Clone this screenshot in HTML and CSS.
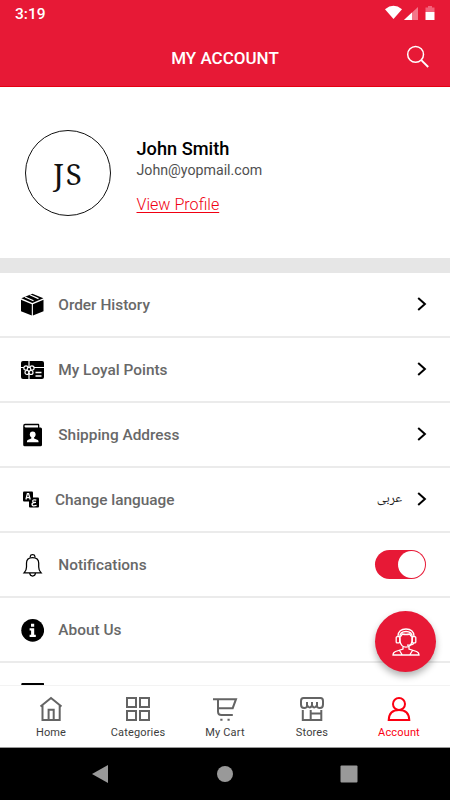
FILE: index.html
```html
<!DOCTYPE html>
<html lang="en">
<head>
<meta charset="utf-8">
<title>My Account</title>
<link rel="stylesheet" href="styles.css">
</head>
<body>
<div class="app">
  <header class="header">
    <div class="status">
      <span class="time">3:19</span>
      <svg class="status-icons" width="52" height="16" viewBox="0 0 52 16">
        <path d="M0 4.2Q8.500-2.600 17 4.200L8.500 14Z" fill="#fff"/>
        <path d="M33 2V15H19Z" fill="#f3778a"/><path d="M27 7.400V15H19Z" fill="#fff"/>
        <path d="M43 1h4v1.500h2.500V7h-9V2.500H43Z" fill="#f3627a"/><path d="M40.500 7h9v8h-9Z" fill="#fff"/>
      </svg>
    </div>
    <div class="titlebar">
      <h1>MY ACCOUNT</h1>
      <svg class="search" width="24" height="24" viewBox="0 0 24 24" fill="none" stroke="#fff"><circle cx="9.600" cy="9.400" r="7.900" stroke-width="1.500"/><path d="M15.300 15.100L22.200 22" stroke-width="1.900"/></svg>
    </div>
  </header>

  <section class="profile">
    <div class="avatar">JS</div>
    <div class="who">
      <div class="name">John Smith</div>
      <div class="email">John@yopmail.com</div>
      <a class="view">View Profile</a>
    </div>
  </section>

  <main class="list">
    <div class="row">
      <svg class="icon" width="24" height="24" viewBox="0 0 24 24"><path d="M12.400 .8L23.400 5.300L12.400 10L1.400 5.300Z"/><path d="M1 6.800L11.800 11.200V22.600L1 18.200ZM23.500 6.800L12.900 11.200V22.600L23.500 18.200Z"/><path d="M5 4L13.500 7.800M9.800 1.800L18.500 5.600" stroke="#fff" stroke-width="1.200"/></svg>
      <span class="label">Order History</span>
      <svg class="chev" width="10" height="14" viewBox="0 0 10 14"><path d="M1.200 1L7.900 7L1.200 13"/></svg>
    </div>
    <div class="row">
      <svg class="icon" width="24" height="24" viewBox="0 0 24 24"><rect x="1" y="3" width="23" height="18" rx="2"/><g fill="none" stroke="#fff" stroke-width="1.200"><path d="M9 3V21M1 9.500H24"/><path d="M15.500 14.500h6M15.500 18h6" stroke-width="1.500"/><g fill="#000"><circle cx="6" cy="10" r="2.200"/><circle cx="11.900" cy="10" r="2.200"/><circle cx="7" cy="14.500" r="2"/><circle cx="11" cy="14.500" r="2"/><circle cx="9" cy="11.200" r="1.800"/></g></g></svg>
      <span class="label">My Loyal Points</span>
      <svg class="chev" width="10" height="14" viewBox="0 0 10 14"><path d="M1.200 1L7.900 7L1.200 13"/></svg>
    </div>
    <div class="row">
      <svg class="icon" width="24" height="24" viewBox="0 0 24 24"><path d="M5 .8H18.200Q19.300 .8 19.300 2V4.500H20.500Q22 4.500 22 6V21.700Q22 23.300 20.500 23.300H4.800Q3.200 23.300 3.200 21.700V2.700Q3.200.8 5 .8Z"/><path d="M5.100 2.200H18V4.400H5.500Q4.500 4.200 4.500 3.200Q4.500 2.400 5.100 2.200Z" fill="#fff"/><circle cx="12.700" cy="11.400" r="2.900" fill="#fff"/><path d="M11.300 13.500h2.800v1.900l3.700 1.500q.8.400.8 2.400H6.900q0-2 .8-2.400l3.600-1.500Z" fill="#fff"/></svg>
      <span class="label">Shipping Address</span>
      <svg class="chev" width="10" height="14" viewBox="0 0 10 14"><path d="M1.200 1L7.900 7L1.200 13"/></svg>
    </div>
    <div class="row lang">
      <svg class="icon" width="24" height="24" viewBox="0 0 24 24"><rect x="3" y="3.600" width="10" height="10" rx="1"/><rect x="9" y="9.600" width="10" height="10" rx="1"/><g fill="none" stroke="#fff" stroke-width="1.300"><path d="M5.900 11.500L7.400 5.600H8.600L10.200 11.500M6.700 9.700H9.400"/><path d="M16.300 12.100Q12.300 11.200 12.800 13.500Q13.200 14.500 15.300 14.400Q12 14.700 12 16.400Q12.200 18.700 16.600 17.400M13.200 14.400H16"/></g></svg>
      <span class="label">Change language</span>
      <span class="arabic" lang="ar" dir="rtl">عربى</span>
      <svg class="chev" width="10" height="14" viewBox="0 0 10 14"><path d="M1.200 1L7.900 7L1.200 13"/></svg>
    </div>
    <div class="row">
      <svg class="icon" width="24" height="24" viewBox="0 0 24 24" fill="none" stroke="#000" stroke-width="1.250"><path d="M4.200 19.800Q6.500 17.500 6.500 14V10Q6.500 4.500 12.500 4.500Q18.700 4.500 18.700 10V14Q18.700 17.500 21 19.800Z"/><path d="M10.300 4.600V3.200Q10.500 1.500 12.600 1.500Q14.700 1.500 14.900 3.200V4.600M9.700 20Q10 23 12.600 23T15.500 20"/></svg>
      <span class="label">Notifications</span>
      <span class="toggle"><span class="knob"></span></span>
    </div>
    <div class="row">
      <svg class="icon" width="24" height="24" viewBox="0 0 24 24"><circle cx="12.700" cy="12.300" r="11.400"/><path d="M11 5.800h3.200v3H11ZM9.600 10.300h4.600v6.500h1.600v2.100H9.600v-2.100h1.500v-4.400H9.600Z" fill="#fff"/></svg>
      <span class="label">About Us</span>
    </div>
    <div class="row">
      <svg class="icon" width="24" height="24" viewBox="0 0 24 24"><rect x="1.300" y="0" width="23" height="20" rx="1"/></svg>
    </div>
  </main>

  <div class="support">
    <svg width="30" height="30" viewBox="0 0 30 30" fill="none" stroke="#fff" stroke-width="1.300"><path d="M7 10V9Q7.500 2 15 2Q22.500 2 23 9V10M8.700 10Q9 4.500 15 4.500Q21 4.500 21.300 10"/><path d="M9 9V14Q10 20.200 15 20.200Q20 20.200 21 14V9M9.200 9.500Q10.600 9 11.200 7Q15 8 18.800 7Q19.400 9 21 9.500"/><rect x="5.200" y="9.600" width="3.500" height="6.300" rx="1"/><rect x="21.300" y="9.600" width="3.500" height="6.300" rx="1"/><path d="M22.900 16Q22 18.200 16 18.200M12 19.500V22L4.500 24.500Q2 25.500 2 28H28Q28 25.500 25.500 24.500L18 22V19.500M8.500 23.500L11 27.500M21.500 23.500L19 27.500"/></svg>
  </div>

  <nav class="tabs">
    <div class="tab"><svg width="26" height="26" viewBox="0 0 26 26"><path d="M2.500 10.500L13 2L23.500 10.500M4.500 9V23.900H21.700V9M10.600 23V13.700H15.700V23"/></svg><span>Home</span></div>
    <div class="tab"><svg width="26" height="26" viewBox="0 0 26 26"><path d="M2 2h9v9H2ZM15 2h9v9h-9ZM2 15h9v9H2ZM15 15h9v9h-9Z"/></svg><span>Categories</span></div>
    <div class="tab"><svg width="26" height="26" viewBox="0 0 26 26"><path d="M1 3.200H24L20.700 12.200H6.200M6 3.200V15.500Q6 19 9.500 19H20.800"/><path d="M8.300 23.800h2.200M15.500 23.800h2.200" stroke-width="2"/></svg><span>My Cart</span></div>
    <div class="tab"><svg width="26" height="26" viewBox="0 0 26 26"><path d="M4.500 2H21.500Q24 2 24 5V8.500Q24 12 20.800 12Q18 12 17.700 9.500Q15.200 13.500 13 9.500Q10.800 13.500 8.300 9.500Q8 12 5.200 12Q2 12 2 8.500V5Q2 2 4.500 2ZM8 6v4M13 6v4M18 6v4M3.800 14V24H11.700V14M11.700 17.500H22.300M22.300 14V24H11"/></svg><span>Stores</span></div>
    <div class="tab active"><svg width="26" height="26" viewBox="0 0 26 26"><circle cx="13" cy="8" r="6"/><path d="M2.700 24Q3 14 13 14T23.300 24Z"/></svg><span>Account</span></div>
  </nav>

  <div class="system">
    <svg width="18" height="20" viewBox="0 0 18 20"><path d="M-1 10L15 1V19Z" transform="translate(1)"/></svg>
    <svg width="18" height="20" viewBox="0 0 18 20"><circle cx="9" cy="10" r="8"/></svg>
    <svg width="18" height="20" viewBox="0 0 18 20"><rect x=".5" y="1.500" width="17" height="17" rx="1"/></svg>
  </div>
</div>
</body>
</html>
```

FILE: styles.css
```css
* { box-sizing: border-box; }
body { margin: 0; font-family: Roboto, "Liberation Sans", sans-serif; background: #fff; }
svg { display: block; flex: none; }
.app { position: relative; width: 450px; height: 800px; overflow: hidden; display: flex; flex-direction: column; }
.header { height: 87px; flex: none; background: #e71936; border-bottom: 1px solid #e50012; color: #fff; }
.status { height: 28px; display: flex; justify-content: space-between; padding: 5px 13px 0 15px; }
.time { font-size: 15.500px; line-height: 18px; font-weight: 500; }
.titlebar { height: 59px; display: grid; grid-template-columns: 44px 1fr 44px; align-items: center; }
h1 { grid-column: 2; margin: 0; font-size: 17px; line-height: 20px; font-weight: 500; text-align: center; }
.search { margin-bottom: 2px; }
.profile { height: 171px; flex: none; display: flex; align-items: center; padding-left: 25px; gap: 25.500px; }
.avatar { width: 86px; height: 86px; border: 1.200px solid #111; border-radius: 50%; display: flex; align-items: center; justify-content: center; font-family: "Noto Serif", "Droid Serif", "Liberation Serif", serif; font-size: 29.500px; letter-spacing: 2px; color: #111; padding: 2px 0 0 1px; }
.who { padding-top: 8px; }
.name { font-size: 18.200px; line-height: 23px; font-weight: 500; color: #000; }
.email { font-size: 14.200px; line-height: 20px; font-weight: 400; color: #505050; }
.view { display: block; margin-top: 14px; font-size: 16.100px; line-height: 22px; font-weight: 300; color: #f00012; text-decoration: underline; text-decoration-thickness: 1px; text-underline-offset: 2px; }
.list { flex: 1; min-height: 0; overflow: hidden; border-top: 15px solid #e6e6e6; }
.row { height: 65px; display: flex; align-items: center; padding: 0 23px 0 20px; border-bottom: 2px solid #ebebeb; }
.icon { margin-right: 14.300px; }
.label { font-size: 15.400px; line-height: 20px; font-weight: 500; color: #686868; margin-right: auto; white-space: nowrap; padding-top: 1px; }
.lang .icon { margin-right: 11px; }
.chev { fill: none; stroke: #000; stroke-width: 2; margin-bottom: 1px; }
.arabic { font-family: "Noto Naskh Arabic", "Noto Sans Arabic", "DejaVu Sans", sans-serif; font-size: 13.500px; line-height: 20px; color: #222; margin-right: 15px; }
.toggle { width: 51px; height: 29px; border-radius: 15px; background: #e71936; display: flex; justify-content: flex-end; align-items: center; padding-right: 1px; margin-right: 1px; }
.knob { width: 27px; height: 27px; border-radius: 50%; background: #fff; }
.support { position: absolute; left: 375px; top: 611px; width: 61px; height: 61px; border-radius: 50%; background: #e71936; display: flex; align-items: center; justify-content: center; box-shadow: 0 4px 7px rgba(0,0,0,.3); }
.tabs { height: 63px; flex: none; position: relative; border-top: 1px solid #f3f3f3; border-bottom: 1px solid #999; background: #fff; display: grid; grid-template-columns: repeat(5, 87px); padding-left: 7.500px; }
.tab { display: flex; flex-direction: column; align-items: center; padding-top: 10px; font-size: 11px; line-height: 14px; color: #3d3d3d; gap: 4px; letter-spacing: .15px; }
.tab svg { fill: none; stroke: #646464; stroke-width: 2; }
.tab.active { color: #fb0012; }
.tab.active svg { stroke: #fb0012; }
.system { height: 52px; flex: none; background: #000; display: flex; justify-content: center; align-items: center; gap: 106px; }
.system svg { fill: #999; }
```
